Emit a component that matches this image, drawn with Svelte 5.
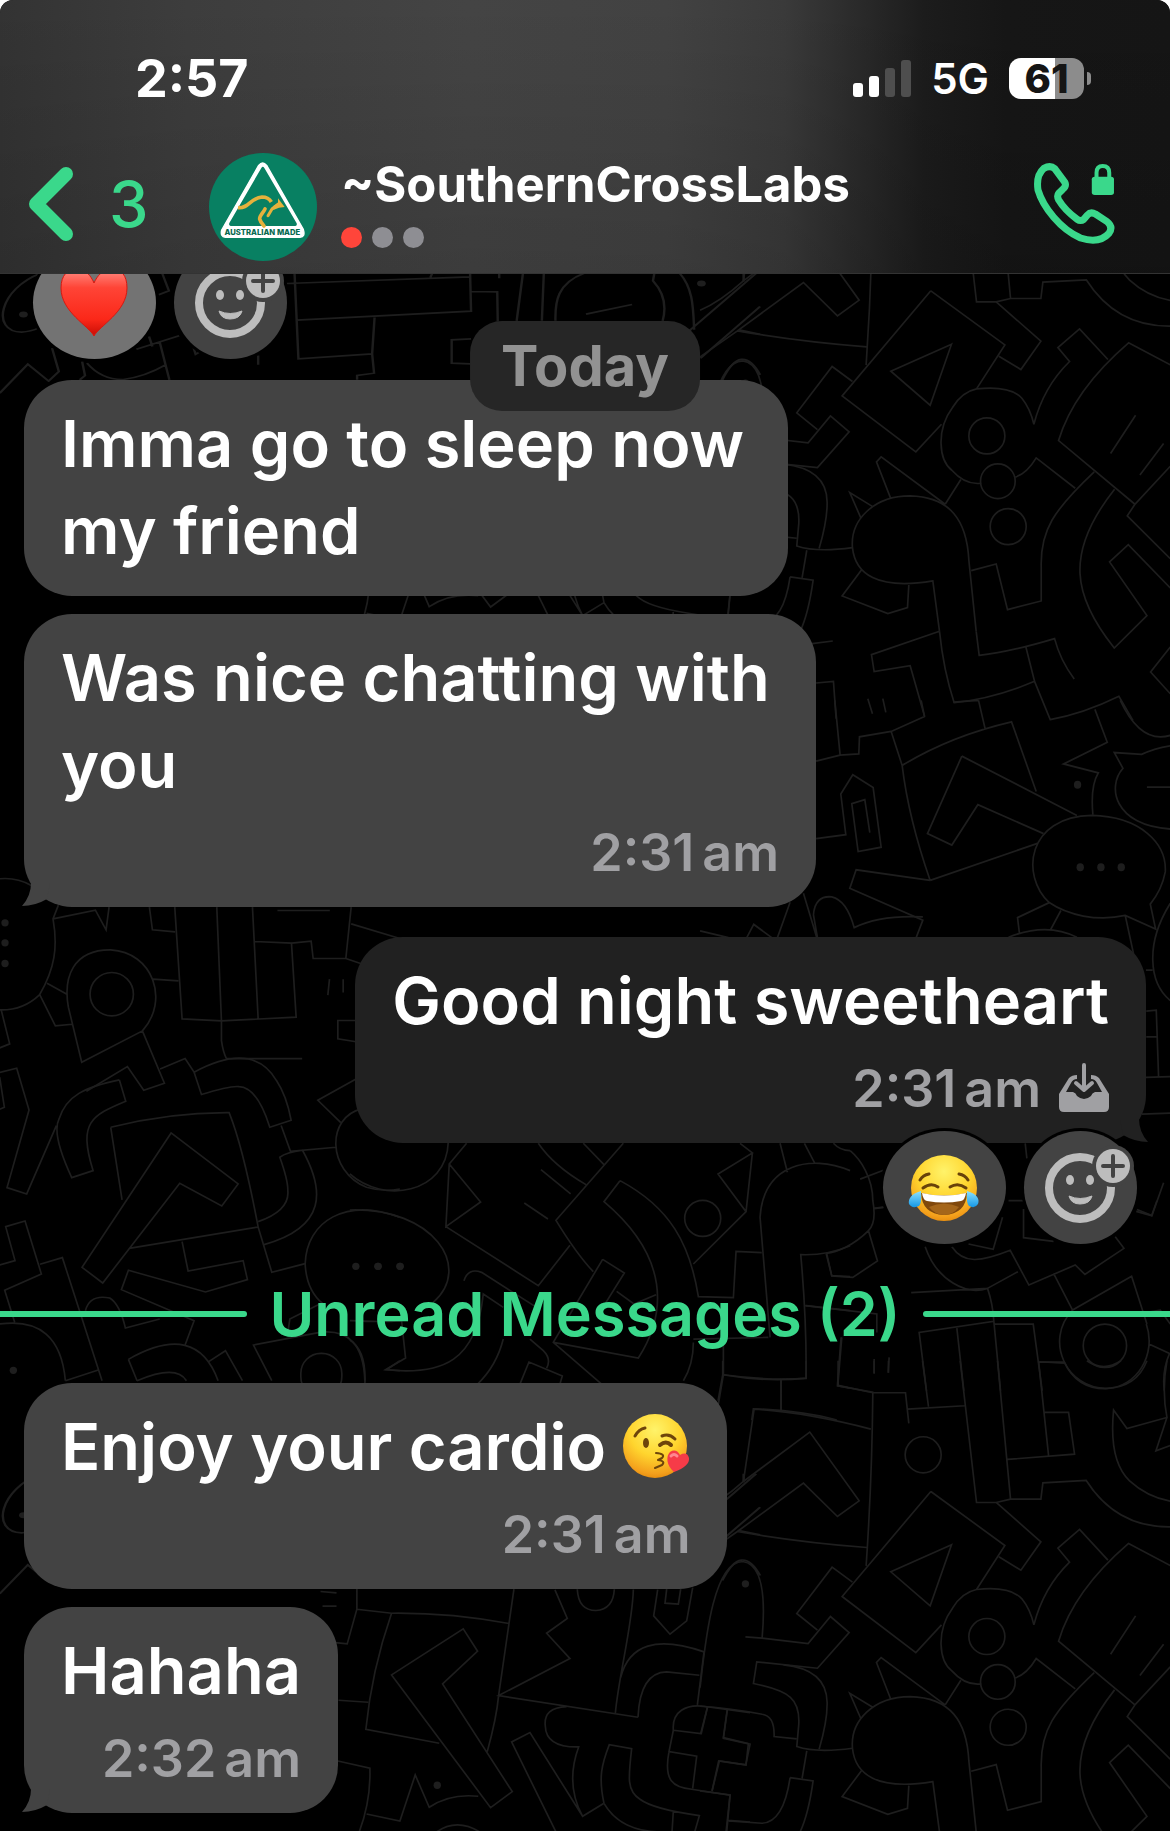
<script>
  const contact = '~SouthernCrossLabs';
  const messages = [
    { lines: 'Imma go to sleep now my friend', width: 'medium' },
    { lines: 'Was nice chatting with you', width: 'wide', time: '2:31 am', tail: true }
  ];
  const bars = ['one', 'two', 'three off', 'four off'];
</script>

{#snippet addReaction()}
  <button class="reaction add" aria-label="Add reaction">
    <svg viewBox="0 0 113 113" aria-hidden="true">
      <circle cx="56" cy="57" r="31" fill="none" stroke="#bdbdbd" stroke-width="8" />
      <circle cx="89" cy="35" r="21" fill="#434343" />
      <circle cx="89" cy="35" r="17" fill="#bdbdbd" />
      <path d="M79 35H99M89 25V45" stroke="#434343" stroke-width="4" stroke-linecap="round" />
      <ellipse cx="46" cy="49" rx="4" ry="5" fill="#bdbdbd" />
      <ellipse cx="66" cy="49" rx="4" ry="5" fill="#bdbdbd" />
      <path d="M45 65Q56 70 68 65Q66 73 56 73Q47 73 45 65Z" fill="#bdbdbd" stroke="#bdbdbd" stroke-width="1" stroke-linejoin="round" />
    </svg>
  </button>
{/snippet}

{#snippet tail()}
  <svg class="tail" viewBox="0 0 30 24" aria-hidden="true">
    <path d="M9 0Q9 13 0 23Q13 23 25 16L28 0Z" />
  </svg>
{/snippet}

<div class="phone">
  <header>
    <div class="status">
      <span class="clock">2:57</span>
      <div class="signals">
        <div class="bars">
          {#each bars as bar}<i class={bar}></i>{/each}
        </div>
        <span class="network">5G</span>
        <div class="battery"><span>61</span></div>
      </div>
    </div>
    <div class="nav">
      <button class="back" aria-label="Back, 3 unread chats">
        <svg viewBox="0 0 46 76" aria-hidden="true">
          <path d="M38 8L8 38L38 68" />
        </svg>
        <span>3</span>
      </button>
      <svg class="avatar" viewBox="57 39 324 324" role="img" aria-label="Australian Made">
        <circle cx="219" cy="201" r="162" fill="#088062" />
        <path d="M206 76Q218 62 230 76L340 268Q347 292 330 292H106Q90 290 95 270Z" fill="#fff" stroke="#fff" stroke-width="4" stroke-linejoin="round" />
        <path d="M214 84Q218 77 223 84L320 250Q322 257 316 258H122Q115 256 118 249Z" fill="#088062" />
        <g fill="none" stroke="#e6b13c" stroke-linecap="round" stroke-linejoin="round">
          <path d="M144 203C176 207 181 173 216 171Q235 171 244 186" stroke-width="11" stroke-linecap="butt" />
          <path d="M225 207C219 219 208 228 209 237Q211 246 222 258" stroke-width="11" />
          <path d="M234 227L246 207L265 192" stroke-width="9" />
        </g>
        <path d="M250 198L264 190L264 175L273 187L284 201L267 203L250 210Z" fill="#e6b13c" />
        <text x="217" y="286" text-anchor="middle">AUSTRALIAN MADE</text>
      </svg>
      <div class="who">
        <h1>{contact}</h1>
        <div class="dots"><i class="red"></i><i></i><i></i></div>
      </div>
      <button class="call" aria-label="Secure call">
        <svg viewBox="0 0 82 82" aria-hidden="true">
          <g transform="scale(.3635 .3333) translate(-1197 -486)">
            <path class="handset" d="M1254 503L1282 544Q1287 555 1275 566L1265 577Q1259 585 1265 597Q1282 628 1316 655Q1325 662 1334 655L1344 642Q1353 631 1366 639L1398 662Q1416 678 1403 697Q1377 729 1325 711C1270 685 1222 619 1208 567Q1202 523 1224 502Q1242 491 1254 503Z" />
            <rect x="1356" y="527" width="61" height="55" rx="8" fill="#3ad88b" />
            <path d="M1369 530V515Q1369 495 1386 495Q1404 495 1404 515V530" class="shackle" />
          </g>
        </svg>
      </button>
    </div>
  </header>

  <main>
    <svg class="wallpaper" viewBox="0 0 1170 1831" preserveAspectRatio="xMidYMin slice" aria-hidden="true">
      <g id="doodles">
        <g transform="translate(700 160) scale(.3333)">
          <path d="M68 0V42Q200 65 318 52V0M68 42L54 120M243 56V148M414 0V74L518 96M522 0V38M565 0V36M518 96H616L626 188M622 145L793 135M667 0L685 138M780 0L829 425H888L931 415H1022L1028 366L1158 359Q1248 500 1410 498M892 0L931 415M922 296L1123 280L1105 155H1032M1015 0L1045 284M1015 4H1092Q1130 84 1215 84Q1310 80 1340 0M1160 0Q1210 35 1262 0M1400 0Q1384 90 1400 170L1280 203L1240 148Q1225 300 1288 360Q1340 408 1410 421M1400 170L1367 270L1410 254" />
          <path d="M0 450Q60 425 130 362L329 214L477 420L412 467L310 367L112 512L0 590M162 145L130 362M162 145Q320 155 512 205M518 96Q516 350 498 615M112 512Q300 545 500 560" />
          <path d="M692 392L914 554L829 686M692 392L426 707L647 875L724 792M754 552L572 633L690 735ZM888 425L1022 543L962 628L896 588M457 664L396 619L290 758L352 808M136 828L186 832L324 848L391 767L447 815L352 922L170 903L160 968C270 990 300 1015 296 1090L290 1157Q350 1177 457 1162" />
          <path d="M0 980C15 850 38 602 128 602C190 610 196 720 186 832M250 912Q380 925 381 1025Q382 1080 357 1165M0 1036Q80 1040 186 1060Q224 1065 222 1127L290 1134M82 1045L70 1132L150 1150L137 1212L58 1200L36 1290M22 1040L3 1120M0 1290L90 1302L78 1413M320 1170L306 1252M270 1250L339 1260Q325 1360 300 1413M270 1250Q250 1385 185 1387L86 1380" />
          <path d="M829 686Q930 675 965 714Q990 745 1001 792Q1030 680 1108 604L1073 562L1138 506L1223 598M829 686Q785 695 757 742C707 810 716 900 755 930Q795 975 843 969M945 951Q980 940 1008 893L1125 984M782 958L735 1032" />
          <circle cx="669" cy="282" r="54" /><circle cx="860" cy="827" r="54" /><circle cx="893" cy="963" r="52" /><circle cx="924" cy="1099" r="54" />
          <path d="M1410 614L1285 548Q1120 690 1075 841L1304 1032L1410 918M1304 1032L1281 1067L1410 1195M1306 765L1231 880M1390 850L1319 944M1182 935C1060 1050 1020 1110 1023 1220V1322L922 1348L888 1211L813 1231M1243 987C1090 1180 1120 1310 1242 1463L1340 1366L1228 1205L1284 1153L1410 1283" />
          <path d="M457 1162C450 1080 520 1007 630 1007C750 1010 800 1080 806 1200L828 1413M457 1162C465 1240 530 1290 698 1262L718 1413M485 1228L426 1307L563 1360L622 1342L626 1274M483 1075L449 997L519 1040M571 1013L529 905L543 890L735 1032" />
          <circle class="dot" cx="136" cy="669" r="11" />
        </g>
        <g transform="translate(300 360) scale(.3333)">
          <path d="M171 80V145L142 249L107 245M171 145L275 157Q450 155 627 188M275 157Q215 330 198 505L418 547M642 85L596 404Q590 470 562 572M765 87L802 173L740 217L810 293L596 404L1014 469M116 418L205 424M114 600L210 622Q213 720 178 813M200 759L300 780L346 642L388 739Q450 697 535 706M490 204L533 271L428 369L637 692L572 740L275 342ZM62 92L110 96M68 136H110" />
          <path d="M832 85Q835 148 888 149Q940 145 943 85M1000 86C998 190 955 350 946 458M962 350Q1000 200 1212 273M1014 469Q1020 335 1100 333L1198 343M1073 86L1061 165L1110 220L1160 180L1178 80M1100 85L1095 127L1135 130L1142 85M1212 273L1192 432M800 437Q730 440 736 495Q738 560 836 558Q795 670 848 766L912 727M848 766L690 515L635 543L768 813M912 727C895 650 905 610 928 551L995 563C985 650 980 690 1020 715Q1060 745 1198 764L1184 813M912 727Q960 810 1080 813M1120 508L1202 518L1222 440M1120 508C1115 450 1160 430 1210 436L1350 455M1282 444L1270 530L1345 548L1338 612L1256 600L1236 690M1120 508L1107 572L1190 586L1178 682M1107 572C1090 660 1120 680 1175 685L1290 703L1280 813M1120 750L1116 813M1284 778L1350 783M410 813Q470 770 540 813" />
          <circle class="dot" cx="412" cy="673" r="11" />
        </g>
        <g transform="translate(700 260) scale(.3333)">
          <path d="M718 1113Q730 1230 762 1327Q880 1315 1003 1263L977 1160M828 1113L837 1185Q930 1175 1063 1135Q1080 1200 1122 1256M718 1113L514 1183L522 1234L630 1216L673 1367M1410 1160L1351 1235L1410 1300M1003 1263L1050 1378Q1150 1360 1256 1308L1298 1380M336 1150L398 1142M348 1268L400 1263L408 1375M503 1315L517 1360M548 1315L557 1356" />
        </g>
        <g transform="translate(700 700) scale(.3333 .3571)">
          <path d="M404 0L420 153L476 150L478 102L573 87L673 45L663 0M348 170L420 153M573 87L606 182Q625 330 690 504M606 182Q750 100 934 60L1008 255M835 0L855 80M760 5L835 0M1184 25L1221 117L1090 178L1194 203Q1170 240 1178 320M1260 0C1300 80 1350 115 1410 98M1410 127Q1360 135 1324 151L1242 146L1268 190C1220 240 1240 350 1410 360M1340 243H1410M785 156L1130 322M785 156L682 373L755 405L833 292L1030 373M690 504L1012 400M690 504L468 474L449 526L668 615L648 664M348 387L437 376L422 262L458 208L519 244L543 411L474 423L455 289L494 278L509 370" />
          <path d="M1047 566C960 490 980 325 1175 322C1320 325 1400 400 1395 480Q1385 530 1350 570L1366 640L1275 602C1190 620 1100 600 1047 566M1082 588L1051 642M1047 566L952 608L958 655M925 663Q1040 620 1130 663M1275 602L1300 710M1410 568C1335 680 1345 790 1410 840M1337 755H1357M1338 870L1368 867L1375 1055M1338 942H1370M1337 1055L1410 1053M1325 1158L1410 1155M340 600Q345 545 395 550Q440 560 462 636Q540 600 668 606M340 600L352 664M310 540L350 664M270 565L232 664M140 664L161 627L215 664M0 645L85 664" />
          <circle class="dot" cx="1132" cy="236" r="11" /><circle class="dot" cx="1140" cy="467" r="11" /><circle class="dot" cx="1202" cy="467" r="11" /><circle class="dot" cx="1263" cy="467" r="11" />
          <path d="M975 1240L980 1282M480 1340L550 1315M520 1422L550 1418M925 1400H970M1310 1425L1355 1442L1390 1350" />
        </g>
        <g transform="translate(0 860) scale(.3333)">
          <path d="M0 55Q50 50 95 75M176 134L160 175C175 260 165 325 120 402Q70 450 0 448M160 175L287 149L319 208L328 140M142 368L203 402M120 402L167 496L217 491M5 450L30 550L0 562M246 605L206 440C190 350 220 267 333 268C460 275 510 420 428 511ZM428 511L494 668L432 689L383 618L260 692M460 356L536 361M449 140L458 208L526 214M525 140L547 475L665 481L889 470L875 248L765 243M651 140L665 481V540Q670 575 680 594H907M758 140L775 474M875 248L934 242L940 294H1038L1054 140M1054 190L1200 234M1038 294L1100 315M833 150H990M989 356L984 404M1030 356V396M1078 480H1014V535L1078 545M1078 650L954 719L1023 786" />
          <circle cx="336" cy="401" r="65" />
          <path d="M481 625L556 594L583 635Q760 540 830 660Q860 705 874 779L810 800Q772 680 718 678Q690 675 605 702L583 635M0 636L51 623L88 748L22 981L81 1000L170 795M0 650L14 740L0 746M359 658L378 722C275 765 235 785 280 930L216 951Q155 820 178 775C200 705 255 680 359 658M333 800Q510 755 688 756Q730 860 775 1099L388 1163M333 800L367 1018M514 817L715 970L666 1036L540 968L309 1267L247 1220ZM844 795L872 872L1008 860M775 1083Q870 1050 864 990Q865 960 840 890Q860 875 908 869C975 990 980 1100 793 1152M775 1099L816 1235L916 1209M547 1143L565 1231L730 1200L743 1257L617 1294L386 1229L365 1287L583 1380L556 1453M1085 745C980 770 980 930 1100 980Q1150 995 1200 985" />
          <path d="M1200 1070C1040 1010 920 1080 916 1210Q920 1290 970 1330M0 1213L46 1200L18 1098L76 1081L125 1240L15 1289L45 1385M121 1211L188 1191L307 1560M257 1350Q270 1300 330 1312Q360 1330 377 1402L480 1375M0 1390Q180 1365 197 1560M197 1560L298 1527M386 1496Q590 1380 655 1560M386 1496L412 1560M412 1560Q530 1510 560 1560M628 1502L677 1470L728 1560M960 1415L761 1453L816 1560M960 1415Q1090 1400 1095 1560M865 1410L870 1375L960 1330M1200 1500L1160 1527L1200 1530" />
          <rect x="903" y="1478" width="123" height="130" rx="60" />
          <circle class="dot" cx="16" cy="187" r="11" /><circle class="dot" cx="16" cy="247" r="11" /><circle class="dot" cx="16" cy="309" r="11" /><circle class="dot" cx="1068" cy="1217" r="11" /><circle class="dot" cx="1134" cy="1217" r="11" /><circle class="dot" cx="1200" cy="1217" r="11" /><circle class="dot" cx="41" cy="1529" r="11" />
        </g>
        <g transform="translate(350 1120) scale(.3333)">
          <path d="M0 160C100 250 290 220 295 65M350 68L298 130L392 244L288 318L298 130M288 318L565 495L660 374M0 268C250 260 370 440 250 545M565 68Q610 135 708 192M700 68L762 132M820 68L618 299Q680 400 730 453M573 147L662 220M523 247L594 295M810 180L762 243C960 410 950 580 865 712L610 665M810 180C960 260 1020 370 1045 528L1150 531L1158 392L1235 396M1170 68L1207 97L1104 160L1188 273L1030 430M1207 97L1188 273M1290 68L1312 155M1363 68L1395 130M1450 68Q1470 90 1500 90M1500 150C1380 100 1240 130 1230 290L1260 650M1500 375Q1430 405 1352 402Q1370 600 1368 773Q1250 780 1120 762M1430 400L1445 465L1500 468M1368 555L1500 570M342 480Q355 440 395 455L560 560M758 416L823 457L740 590M758 416L610 665L755 790M800 512L852 550L918 522M155 600L167 712L107 747C280 765 380 720 400 520L460 560M460 655Q440 735 383 790M510 790L537 724L637 766L630 790M540 655L580 690Q605 715 590 742M0 600Q100 605 155 600M0 658Q50 690 45 790M1030 665Q1030 730 1000 780M1120 665L1120 762L1105 850M1030 655L1255 650M1293 778V868M1205 898L1210 864Q1360 870 1460 898M1473 650L1462 795L1500 802" />
          <circle cx="1058" cy="293" r="54" />
          <circle class="dot" cx="85" cy="437" r="11" /><circle class="dot" cx="151" cy="437" r="11" />
        </g>
        <g transform="translate(690 1200) scale(.3333)">
          <path d="M480 -150C510 -125 548 -70 548 0Q560 65 535 90C490 135 440 155 408 158M535 90L562 181L488 230L425 226L408 158M552 24L580 20M345 315L560 340V395M455 410L443 555L550 575M552 475V518M597 470L594 516M663 276L892 263Q908 310 911 362L687 395L709 570M705 138C740 240 830 285 892 263L983 213M785 138C820 190 870 185 960 149L1016 253L1155 193L1184 221L1301 143L1275 108M835 130L909 146L937 50M1000 25V111L1090 122M1090 218L1147 328L1324 227L1370 370M911 362L931 570M800 382L821 570M911 370H1029L1056 570M1048 483L1122 487M1147 328C1060 420 1130 565 1250 563C1340 560 1400 460 1368 370M1376 430L1438 458Q1415 510 1422 570M1370 335L1410 328L1440 370M1338 32L1384 45L1400 0" />
          <circle cx="1244" cy="435" r="65" />
        </g>
        <g transform="translate(0 268) scale(.4847 .3333)">
          <path d="M85 15C0 60 -20 190 45 192Q65 190 80 180M0 375L58 288L102 340M108 240L122 310L100 340M170 280L176 322L165 335M180 285Q210 335 255 334Q300 325 342 290M282 243L370 203M308 205L315 235M330 222L350 335M335 15L349 68L328 80M400 240L404 258L412 252M533 262V290M592 46L970 26M608 15L616 272L768 257M612 156L972 129L970 15M773 148L768 257L772 315L737 322V335M888 28L892 15M972 70L1026 71L1027 160M1030 15V30M972 212L932 215V285L970 287M1079 15L1066 158M1122 15L1118 158M1205 15C1150 45 1145 100 1146 158M1209 138L1304 109M1350 15L1347 38Q1380 90 1367 158M1402 15C1430 60 1430 120 1432 185M1534 15V40M1560 15L1422 188M1568 115L1445 270M1524 185L1568 198M1490 335Q1530 220 1568 320" />
          <circle class="dot" cx="49" cy="139" r="9" /><circle class="dot" cx="1447" cy="46" r="9" />
        </g>
      </g>
      <use href="#doodles" y="1200" />
    </svg>

    <div class="day">Today</div>

    <div class="reactions received">
      <button class="reaction mine" aria-label="Heart">
        <svg viewBox="0 0 123 113" aria-hidden="true">
          <defs>
            <linearGradient id="heart" x1="0" y1="0" x2="0" y2="1"><stop offset="0" stop-color="#ff8d84" /><stop offset=".28" stop-color="#ff4436" /><stop offset=".75" stop-color="#fb2819" /><stop offset="1" stop-color="#c90d05" /></linearGradient>
          </defs>
          <path d="M61 90C56 80 28 66 28 42C28 29 35 23 43 23C53 23 58 30 61 37C64 30 70 23 79 23C88 23 94 29 94 42C94 66 66 80 61 90Z" fill="url(#heart)" stroke="#d9170e" stroke-width="1" />
        </svg>
      </button>
      {@render addReaction()}
    </div>

    {#each messages as message}
      <article class="bubble received {message.width}">
        <p>{message.lines}</p>
        {#if message.time}<footer><time>2:31<span></span>am</time></footer>{/if}
        {#if message.tail}{@render tail()}{/if}
      </article>
    {/each}

    <article class="bubble sent">
      <p>Good night sweetheart</p>
      <footer>
        <time>2:31<span></span>am</time>
        <svg class="inbox" viewBox="0 0 50 50" aria-label="Delivered" role="img">
          <path d="M0 31L10 15Q13 12 18 12V16Q14 16 12 20L7 29H14Q17 30 18 33Q25 39 32 33Q33 30 36 29H43L38 20Q36 16 32 16V12Q37 12 40 15L50 31V44Q50 49 45 49H5Q0 49 0 44Z" />
          <path class="arrow" d="M25 2V25M17 20L25 27L33 20" />
        </svg>
      </footer>
      {@render tail()}
    </article>

    <div class="reactions sent">
      <button class="reaction" aria-label="Tears of joy">
        <svg viewBox="0 0 123 113" aria-hidden="true">
          <defs>
            <radialGradient id="face" cx=".5" cy=".25" r=".8"><stop offset="0" stop-color="#fff36a" /><stop offset=".5" stop-color="#ffd52e" /><stop offset=".85" stop-color="#f4a01c" /><stop offset="1" stop-color="#e18408" /></radialGradient>
            <linearGradient id="tear" x1="0" y1="0" x2="0" y2="1"><stop offset="0" stop-color="#8be1ff" /><stop offset="1" stop-color="#1598e6" /></linearGradient>
          </defs>
          <circle cx="61" cy="57" r="33" fill="url(#face)" />
          <path d="M38 62Q61 67 84 62Q83 83 61 84Q39 83 38 62Z" fill="#80480c" />
          <path d="M39 62Q61 67 83 62Q82 69 78 70Q61 73 44 70Q40 69 39 62Z" fill="#fff" />
          <path d="M46 76Q61 69 76 76Q70 84 61 84Q51 83 46 76Z" fill="#a5661a" />
          <path d="M40 57Q48 51 55 56M67 56Q75 51 83 57M37 49Q40 44 46 43M76 43Q82 44 85 49" fill="none" stroke="#68420a" stroke-width="3" stroke-linecap="round" />
          <path d="M38 60C28 63 25 68 26 73Q29 78 36 75Q39 72 38 60ZM84 60C94 63 97 68 95 73Q92 78 86 75Q83 72 84 60Z" fill="url(#tear)" />
        </svg>
      </button>
      {@render addReaction()}
    </div>

    <div class="unread"><span>Unread Messages (2)</span></div>

    <article class="bubble received">
      <p>
        Enjoy your cardio
        <svg class="kiss" viewBox="0 0 68 68" role="img" aria-label="Face blowing a kiss">
          <circle cx="33" cy="34" r="32" fill="url(#face)" />
          <g fill="none" stroke="#6e450b" stroke-width="3" stroke-linecap="round" stroke-linejoin="round">
            <path d="M13 24Q17 17 23 16M40 24Q47 21 53 27" />
            <path d="M38 33Q44 28 49 33" stroke-width="4" />
            <path d="M34 41Q44 42 40 46L36 48Q44 49 40 53L33 56" stroke-width="2" />
          </g>
          <ellipse cx="24" cy="31" rx="3" ry="5" fill="#6e450b" />
          <path d="M52 60C44 53 44 44 48 40Q54 36 58 43Q65 39 67 46Q68 54 52 60Z" fill="#f63b48" />
          <path d="M49 44Q52 41 55 44" fill="none" stroke="#ff8790" stroke-width="3" stroke-linecap="round" />
        </svg>
      </p>
      <footer><time>2:31<span></span>am</time></footer>
    </article>

    <article class="bubble received">
      <p>Hahaha</p>
      <footer><time>2:32<span></span>am</time></footer>
      {@render tail()}
    </article>
  </main>
</div>

<style>
  :global(body) { background: #fff; }
  .phone {
    position: relative;
    overflow: hidden;
    border-radius: 13px 13px 0 0;
    background: #000;
    color: #fff;
    font-family: Inter, 'Liberation Sans', sans-serif;
  }
  button { border: 0; padding: 0; background: none; font: inherit; color: #3ad88b; cursor: pointer; }
  header {
    position: relative;
    z-index: 2;
    box-sizing: border-box;
    height: 274px;
    border-bottom: 1px solid #333;
    background:
      linear-gradient(to bottom, transparent, rgba(0, 0, 0, .12)),
      linear-gradient(to right, #333 0%, #3d3d3d 16%, #444 40%, #424242 57%, #3a3a3a 67%, #2b2b2b 73%, #1c1c1c 79%, #161616 86%, #151515 100%);
  }
  .status {
    display: flex;
    justify-content: space-between;
    align-items: center;
    height: 82px;
    padding: 37px 86px 0 135px;
  }
  .clock { font-size: 52px; font-weight: 700; }
  .signals { display: flex; align-items: center; gap: 20px; }
  .bars { display: flex; align-items: flex-end; gap: 6px; }
  .bars i { width: 10px; border-radius: 3px; background: #fff; }
  .bars .one { height: 14px; }
  .bars .two { height: 21px; }
  .bars .three { height: 29px; }
  .bars .four { height: 37px; }
  .bars .off { background: #4e4e4e; }
  .network { font-size: 42px; font-weight: 600; }
  .battery {
    position: relative;
    width: 75px;
    height: 41px;
    border-radius: 12px;
    background: linear-gradient(to right, #fff 61%, #8c8c8c 61%);
    color: #151515;
    font-size: 40px;
    font-weight: 800;
    line-height: 41px;
    text-align: center;
  }
  .battery::after {
    content: '';
    position: absolute;
    right: -7px;
    top: 14px;
    width: 4px;
    height: 13px;
    border-radius: 0 8px 8px 0;
    background: #8c8c8c;
  }
  .nav { display: flex; align-items: center; height: 108px; padding: 34px 54px 0 28px; }
  .back { display: flex; align-items: center; width: 181px; gap: 35px; padding-bottom: 6px; font-size: 63px; font-weight: 500; }
  .back svg { width: 46px; height: 76px; }
  .back path { fill: none; stroke: #3ad88b; stroke-width: 14; stroke-linecap: round; stroke-linejoin: round; }
  .avatar { width: 108px; height: 108px; flex: none; }
  .avatar text { font: 800 23px Inter, sans-serif; fill: #08694f; }
  .who { flex: 1; padding: 0 0 10px 24px; }
  h1 { margin: 0; font-size: 49px; line-height: 58px; font-weight: 700; }
  .dots { display: flex; gap: 10px; margin-top: 13px; }
  .dots i { width: 21px; height: 21px; border-radius: 50%; background: #8e8e93; }
  .dots .red { background: #ff453a; }
  .call { display: flex; padding-bottom: 6px; }
  .call svg { width: 82px; height: 82px; }
  .handset, .shackle { fill: none; stroke: #3ad88b; stroke-width: 7; stroke-linejoin: round; vector-effect: non-scaling-stroke; }
  .shackle { stroke-width: 4; }

  main { position: relative; display: flex; flex-direction: column; padding: 0 24px 1px; margin-top: -28px; }
  .wallpaper {
    position: absolute;
    inset: -246px 0 0;
    width: 100%;
    height: calc(100% + 246px);
    fill: none;
    stroke: #1e1e1e;
    stroke-width: 5;
  }
  .wallpaper .dot { fill: #1e1e1e; stroke: none; }
  .day {
    position: absolute;
    z-index: 1;
    top: 75px;
    left: 50%;
    transform: translateX(-50%);
    padding: 0 31px;
    border-radius: 32px;
    background: #262626;
    color: #929292;
    font-size: 56px;
    line-height: 90px;
    font-weight: 700;
  }
  .reactions { position: relative; display: flex; gap: 18px; }
  .reactions.received { padding-left: 9px; margin-bottom: 21px; }
  .reactions.sent { align-self: flex-end; padding-right: 9px; margin-top: -12px; }
  .reaction { display: flex; width: 123px; height: 113px; border-radius: 50%; background: #434343; box-shadow: 0 0 0 3px #000; }
  .reaction.add { width: 113px; }
  .reaction.mine { background: #737373; }
  .bubble {
    position: relative;
    box-sizing: border-box;
    align-self: flex-start;
    padding: 20px 37px 13px;
    margin-bottom: 18px;
    border-radius: 48px;
    background: #434343;
    font-size: 65px;
    line-height: 87px;
    font-weight: 600;
  }
  .bubble.medium { width: 764px; padding-bottom: 20px; }
  .bubble.wide { width: 792px; margin-bottom: 30px; }
  .bubble.sent { align-self: flex-end; margin-bottom: 0; background: #212121; }
  .bubble p { margin: 0 0 2px; }
  .bubble footer { display: flex; justify-content: flex-end; align-items: center; gap: 18px; height: 84px; color: #a0a0a3; font-size: 52px; }
  .bubble time { display: flex; gap: 4px; }
  .tail { position: absolute; left: -2px; bottom: 0; width: 30px; height: 24px; fill: #434343; }
  .sent .tail { left: auto; right: -2px; transform: scaleX(-1); fill: #212121; }
  .inbox { width: 50px; height: 50px; fill: #a0a0a3; }
  .inbox .arrow { fill: none; stroke: #a0a0a3; stroke-width: 4; stroke-linecap: round; stroke-linejoin: round; }
  .kiss { width: 68px; height: 68px; vertical-align: -10px; }
  .unread {
    position: relative;
    display: flex;
    align-items: center;
    gap: 22px;
    height: 139px;
    margin: 0 -24px;
    color: #3ad88b;
    font-size: 61px;
    font-weight: 600;
  }
  .unread::before, .unread::after { content: ''; flex: 1; height: 6px; background: #3ad88b; }
  .unread::before { border-radius: 0 3px 3px 0; }
  .unread::after { border-radius: 3px 0 0 3px; }
</style>
